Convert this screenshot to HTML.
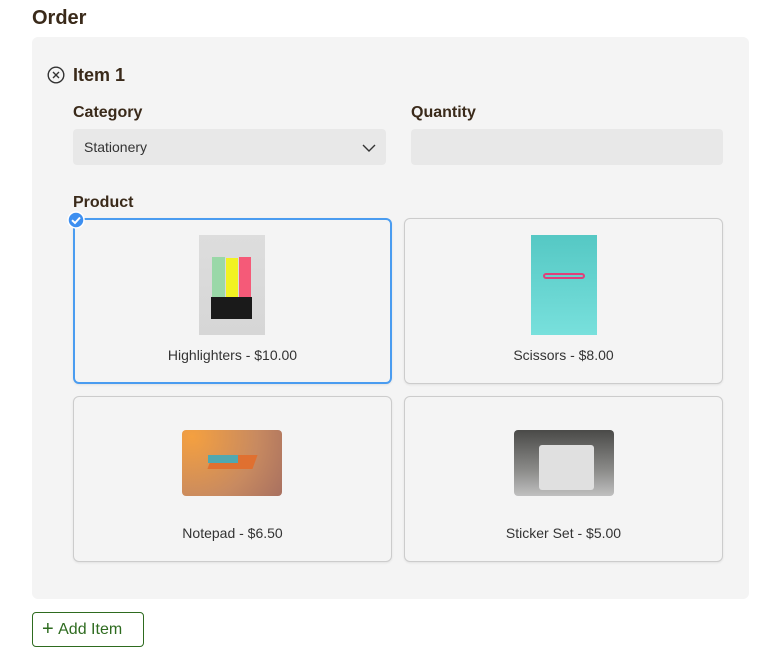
<!DOCTYPE html>
<html><head><style>
*{box-sizing:border-box;margin:0;padding:0}
body{width:783px;height:662px;background:#fff;font-family:"Liberation Sans",sans-serif;color:#333;position:relative;overflow:hidden}
.abs{position:absolute}
h1{position:absolute;left:32px;top:7px;font-size:20px;font-weight:bold;color:#3a2a1a}
.panel{position:absolute;left:32px;top:37px;width:717px;height:562px;background:#f4f4f4;border-radius:6px}
.lbl{position:absolute;font-size:16px;font-weight:bold;color:#3a2a1a}
.field{position:absolute;background:#e8e8e8;border-radius:4px;height:36px}
.card{position:absolute;width:319px;height:166px;border:1px solid #ccc;border-radius:6px;background:#f4f4f4;box-shadow:0 1px 2px rgba(0,0,0,.08)}
.cap{position:absolute;left:0;right:0;text-align:center;font-size:14px;color:#333}
</style></head><body>
<h1>Order</h1>
<div class="panel"></div>
<svg class="abs" style="left:47px;top:66px" width="18" height="18" viewBox="0 0 18 18"><circle cx="9" cy="9" r="7.8" fill="none" stroke="#333" stroke-width="1.4"/><path d="M6 6L12 12M12 6L6 12" stroke="#333" stroke-width="1.4"/></svg>
<div class="lbl" style="left:73px;top:65px;font-size:18px">Item 1</div>
<div class="lbl" style="left:73px;top:104px">Category</div>
<div class="lbl" style="left:411px;top:104px">Quantity</div>
<div class="field" style="left:73px;top:129px;width:313px"><span class="abs" style="left:11px;top:10px;font-size:14px;color:#333">Stationery</span>
<svg class="abs" style="left:289px;top:15px" width="14" height="8" viewBox="0 0 14 8"><path d="M1 1L7 7L13 1" fill="none" stroke="#333" stroke-width="1.4"/></svg></div>
<div class="field" style="left:411px;top:129px;width:312px"></div>
<div class="lbl" style="left:73px;top:194px">Product</div>

<div class="card" style="left:73px;top:218px;border:2px solid #4a9cf0">
<div class="abs" style="left:124px;top:15px;width:66px;height:100px;background:linear-gradient(#ddd,#d6d6d6)">
<div class="abs" style="left:13px;top:22px;width:13px;height:45px;background:#9ad8a8"></div>
<div class="abs" style="left:27px;top:23px;width:12px;height:44px;background:#f2f222"></div>
<div class="abs" style="left:40px;top:22px;width:12px;height:44px;background:#f55a78"></div>
<div class="abs" style="left:12px;top:62px;width:41px;height:22px;background:#1a1a1a"></div>
</div>
<div class="cap" style="top:127px">Highlighters - $10.00</div></div>
<svg class="abs" style="left:67px;top:211px" width="18" height="18" viewBox="0 0 18 18"><circle cx="9" cy="9" r="8" fill="#3d8ff0" stroke="#fff" stroke-width="1.5"/><path d="M5 9.2L8 12L13 6.5" fill="none" stroke="#fff" stroke-width="2"/></svg>

<div class="card" style="left:404px;top:218px">
<div class="abs" style="left:126px;top:16px;width:66px;height:100px;background:linear-gradient(#55c8c4,#78e0dc)">
<div class="abs" style="left:12px;top:38px;width:42px;height:6px;border:2px solid #e0407a;border-radius:4px"></div></div>
<div class="cap" style="top:128px">Scissors - $8.00</div></div>

<div class="card" style="left:73px;top:396px">
<div class="abs" style="left:108px;top:33px;width:100px;height:66px;border-radius:4px;background:radial-gradient(circle at 10% 10%,#f4a040,#c88a60 60%,#a87060)">
<div class="abs" style="left:28px;top:25px;width:45px;height:14px;background:#e07030;transform:skewX(-20deg)"></div>
<div class="abs" style="left:26px;top:25px;width:30px;height:8px;background:#50a8b0"></div></div>
<div class="cap" style="top:128px">Notepad - $6.50</div></div>

<div class="card" style="left:404px;top:396px">
<div class="abs" style="left:109px;top:33px;width:100px;height:66px;border-radius:4px;background:linear-gradient(#4a4a48,#8a8a88 60%,#c0c0c0)">
<div class="abs" style="left:25px;top:15px;width:55px;height:45px;background:#e0e0e0;border-radius:3px"></div></div>
<div class="cap" style="top:128px">Sticker Set - $5.00</div></div>

<div class="abs" style="left:32px;top:612px;width:112px;height:35px;border:1px solid #2e6b1f;border-radius:4px;background:#fff;color:#2e6b1f;font-size:16px;line-height:33px;padding-left:9px;white-space:nowrap">
<span style="font-size:20px;font-weight:300;vertical-align:-1px">+</span>&nbsp;Add Item</div>
</body></html>
